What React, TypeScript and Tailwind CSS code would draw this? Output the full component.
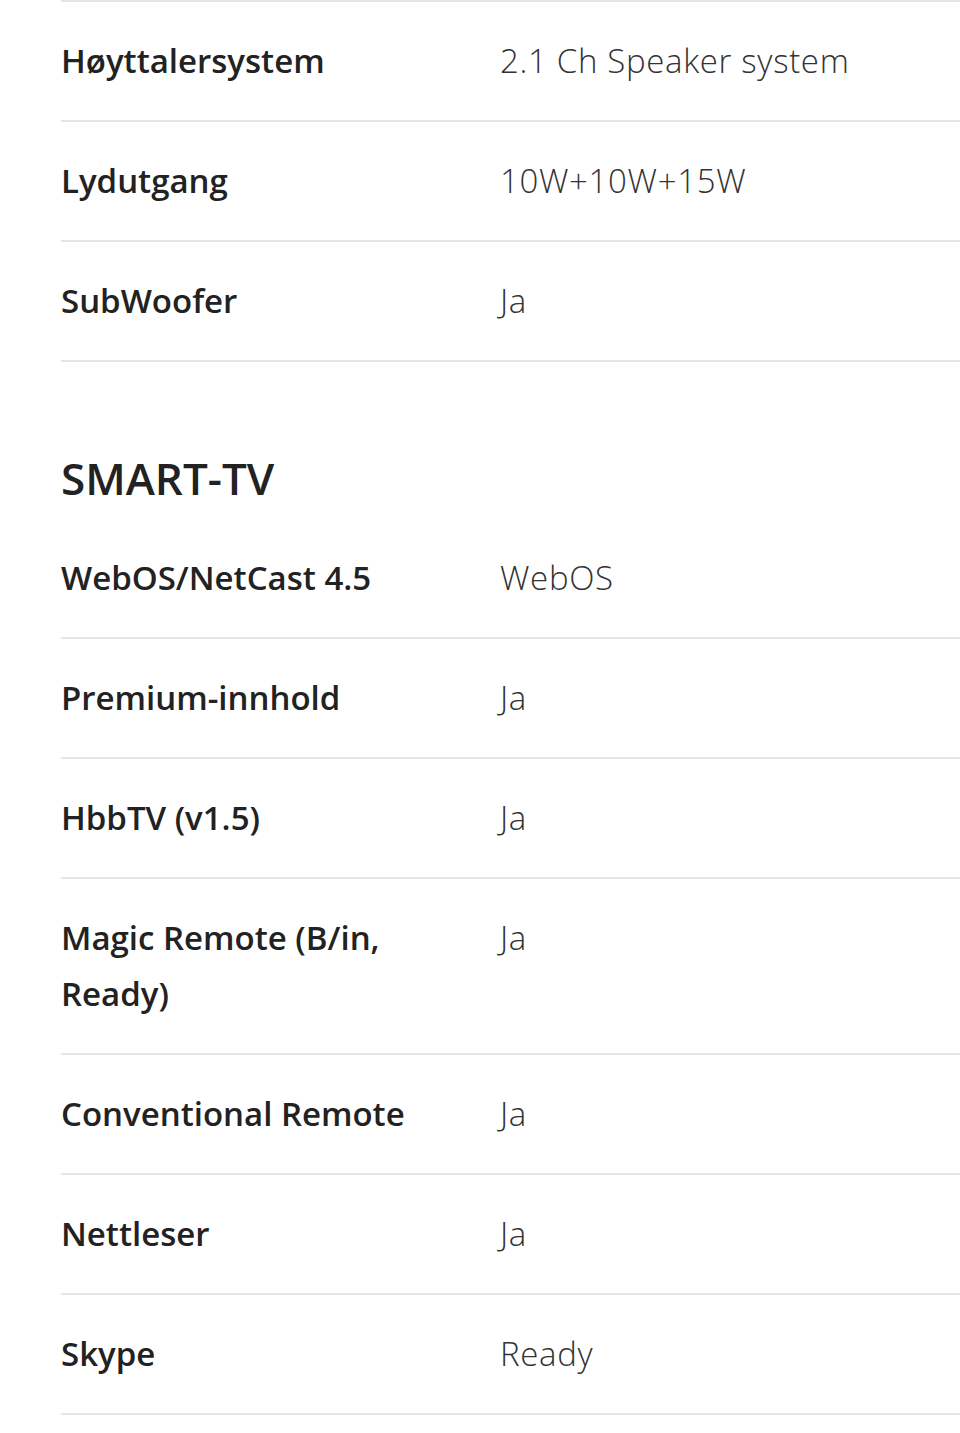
const audio = [
  { label: 'Høyttalersystem', value: '2.1 Ch Speaker system' },
  { label: 'Lydutgang', value: '10W+10W+15W' },
  { label: 'SubWoofer', value: 'Ja' },
]

const smart = [
  { label: 'WebOS/NetCast 4.5', value: 'WebOS' },
  { label: 'Premium-innhold', value: 'Ja' },
  { label: 'HbbTV (v1.5)', value: 'Ja' },
  { label: 'Magic Remote (B/in, Ready)', value: 'Ja' },
  { label: 'Conventional Remote', value: 'Ja' },
  { label: 'Nettleser', value: 'Ja' },
  { label: 'Skype', value: 'Ready' },
]

function SpecRow({ label, value }: { label: string; value: string }) {
  return (
    <div className="flex items-start border-b-2 border-[#e6e6e6] py-[31px]">
      <div className="w-[439px] shrink-0 pr-[30px] text-[33px] leading-[56px] font-semibold text-[#222]">
        {label}
      </div>
      <div className="flex-1 text-[33px] leading-[56px] font-light tracking-[0.02em] text-[#333]">{value}</div>
    </div>
  )
}

export default function App() {
  return (
    <div className="min-h-[1433px] bg-white pl-[61px] font-['Open_Sans',sans-serif]">
      <div className="border-t-2 border-[#e6e6e6]">
        {audio.map((r) => (
          <SpecRow key={r.label} {...r} />
        ))}
      </div>

      <h2 className="mt-[86px] mb-[11px] text-[44px] leading-[60px] font-semibold text-[#222]">SMART-TV</h2>

      <div>
        {smart.map((r) => (
          <SpecRow key={r.label} {...r} />
        ))}
      </div>
    </div>
  )
}
